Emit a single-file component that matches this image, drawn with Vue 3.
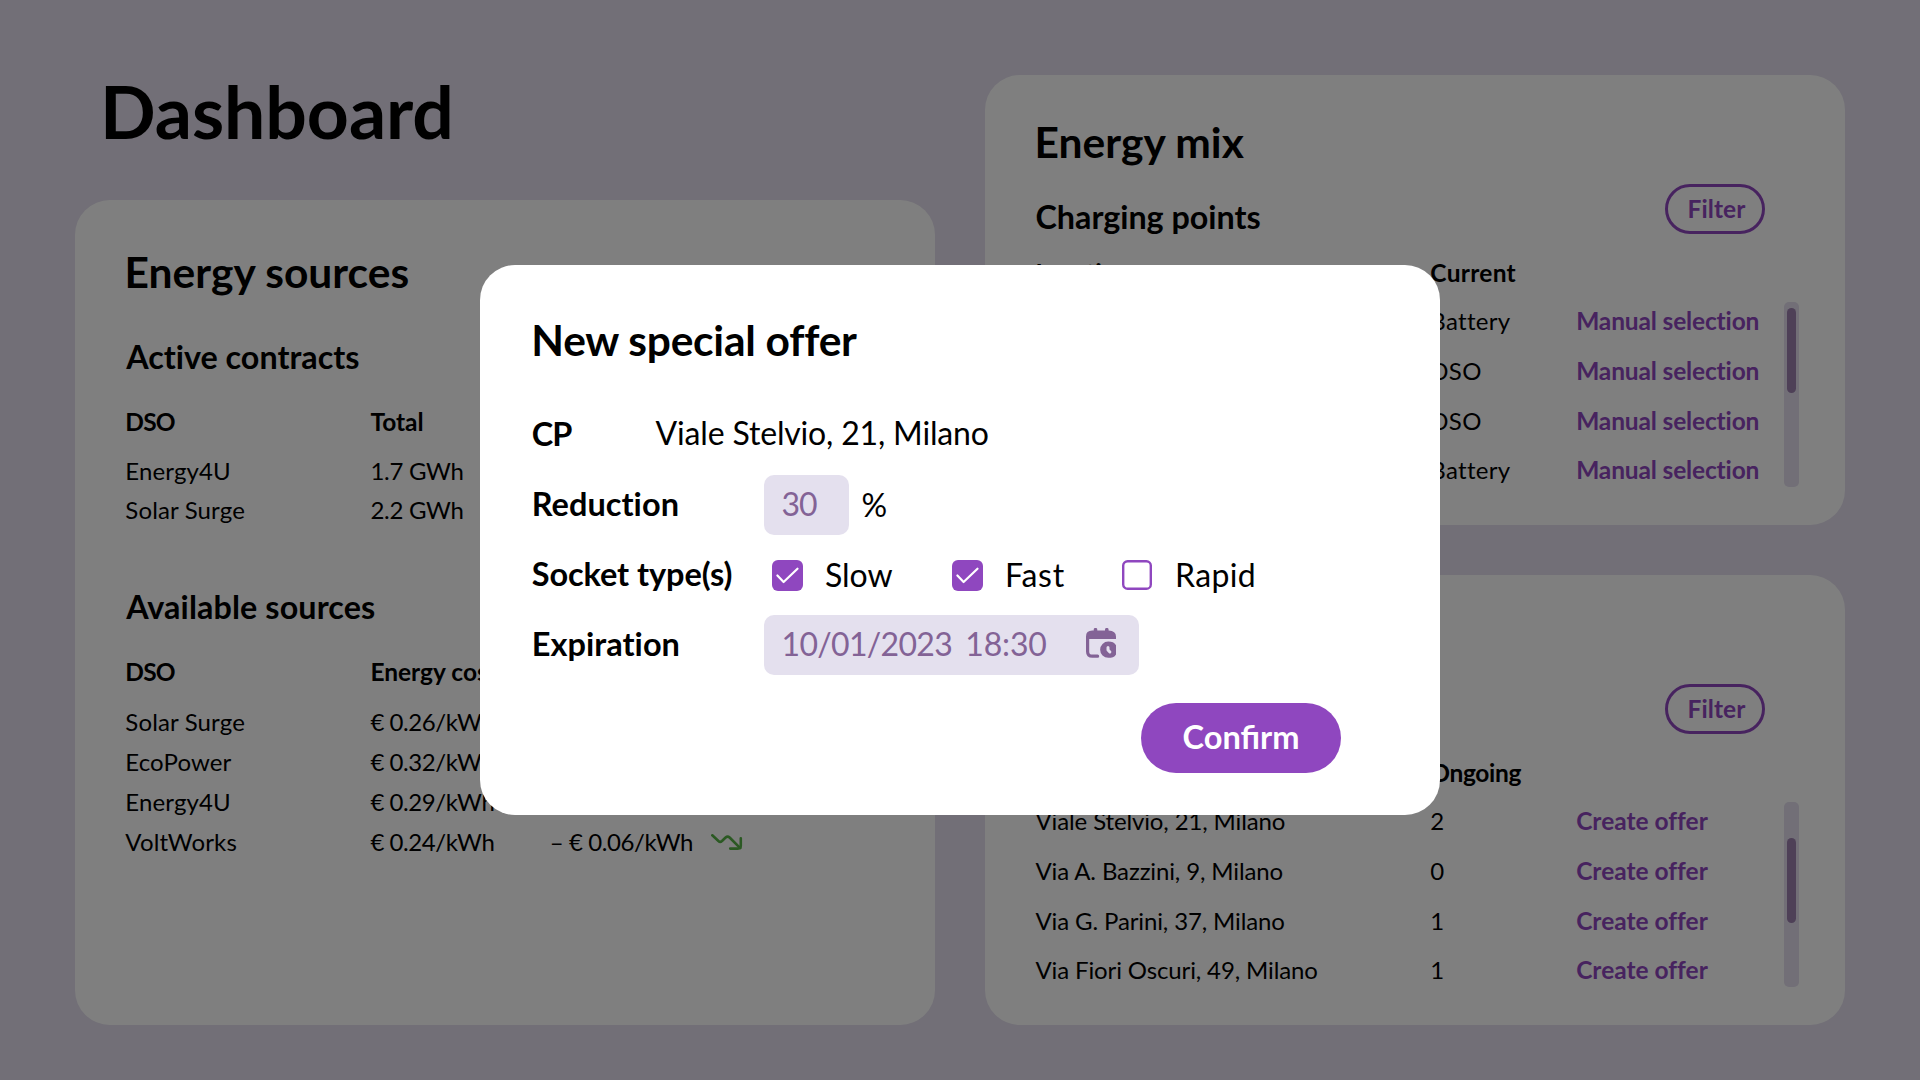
<script setup>
import { ref } from 'vue'

const contracts = [
  { dso: 'Energy4U', total: '1.7 GWh' },
  { dso: 'Solar Surge', total: '2.2 GWh' },
]

const sources = [
  { dso: 'Solar Surge', cost: '€ 0.26/kWh' },
  { dso: 'EcoPower', cost: '€ 0.32/kWh' },
  { dso: 'Energy4U', cost: '€ 0.29/kWh' },
  { dso: 'VoltWorks', cost: '€ 0.24/kWh', delta: '– € 0.06/kWh' },
]

const addresses = [
  'Viale Stelvio, 21, Milano',
  'Via A. Bazzini, 9, Milano',
  'Via G. Parini, 37, Milano',
  'Via Fiori Oscuri, 49, Milano',
]

const panels = [
  {
    title: 'Energy mix',
    kind: 'mix',
    column: 'Current',
    action: 'Manual selection',
    values: ['Battery', 'DSO', 'DSO', 'Battery'],
    thumb: 6,
  },
  {
    title: 'Special offers',
    kind: 'special',
    column: 'Ongoing',
    action: 'Create offer',
    values: ['2', '0', '1', '1'],
    thumb: 36,
  },
]

const sockets = ref([
  { name: 'Slow', on: true },
  { name: 'Fast', on: true },
  { name: 'Rapid', on: false },
])
</script>

<template>
  <div class="screen">
    <main class="dashboard">
      <div class="left">
        <h1>Dashboard</h1>
        <section class="card sources">
          <h2>Energy sources</h2>
          <h3>Active contracts</h3>
          <div class="row head">
            <span class="c1 dso">DSO</span><span class="c2">Total</span>
          </div>
          <div class="body contracts">
            <div v-for="c in contracts" :key="c.dso" class="row">
              <span class="c1 name">{{ c.dso }}</span><span class="c2 energy">{{ c.total }}</span>
            </div>
          </div>
          <h3 class="available">Available sources</h3>
          <div class="row head">
            <span class="c1 dso">DSO</span><span class="c2">Energy cost</span>
          </div>
          <div class="body offers">
            <div v-for="s in sources" :key="s.dso" class="row">
              <span class="c1 name">{{ s.dso }}</span>
              <span class="c2 money">{{ s.cost }}</span>
              <span v-if="s.delta" class="c3 money">{{ s.delta }}</span>
              <svg v-if="s.delta" class="trend" width="32" height="17" viewBox="0 0 32 17">
                <path d="M1.3 1.3 L7.4 7 Q9.2 8.6 11 7 L14.6 3.5 Q16.6 1.7 18.6 3.5 L29.2 14.2" />
                <path d="M19.2 14.6 H26.8 Q29.8 14.6 29.8 11.6 V4.2" />
              </svg>
            </div>
          </div>
        </section>
      </div>

      <div class="right">
        <section v-for="p in panels" :key="p.title" class="card panel" :class="p.kind">
          <h2>{{ p.title }}</h2>
          <div class="sub">
            <h3>Charging points</h3>
            <button class="filter">Filter</button>
          </div>
          <div class="row head">
            <span class="loc">Location</span><span class="val">{{ p.column }}</span>
          </div>
          <div class="list">
            <div class="points">
              <div v-for="(a, i) in addresses" :key="a" class="row">
                <span class="loc address">{{ a }}</span>
                <span class="val">{{ p.values[i] }}</span>
                <a class="action">{{ p.action }}</a>
              </div>
            </div>
            <div class="track"><div class="thumb" :style="{ marginTop: p.thumb + 'px' }"></div></div>
          </div>
        </section>
      </div>
    </main>

    <div class="backdrop"></div>

    <div class="modal">
      <h2 class="modal-title">New special offer</h2>
      <div class="form">
        <div class="field">
          <label class="short">CP</label>
          <span class="text cp-value">Viale Stelvio, 21, Milano</span>
        </div>
        <div class="field">
          <label>Reduction</label>
          <div class="input number"><span>30</span></div>
          <span class="text percent">%</span>
        </div>
        <div class="field">
          <label class="socket">Socket type(s)</label>
          <div v-for="s in sockets" :key="s.name" class="option" :class="s.name.toLowerCase()">
            <svg v-if="s.on" width="31" height="31" viewBox="0 0 31 31">
              <rect width="31" height="31" rx="6" fill="#8f47bf" />
              <path d="M5.4 15.5 L11.6 22 L25.5 8.7" fill="none" stroke="#fff" stroke-width="2.2" stroke-linecap="round" stroke-linejoin="round" />
            </svg>
            <svg v-else width="31" height="31" viewBox="0 0 31 31">
              <rect x="1.2" y="1.2" width="27.6" height="27.6" rx="4.4" fill="none" stroke="#8f47bf" stroke-width="2.4" />
            </svg>
            <span>{{ s.name }}</span>
          </div>
        </div>
        <div class="field">
          <label>Expiration</label>
          <div class="input datetime">
            <span class="date">10/01/2023</span>
            <span class="time">18:30</span>
            <svg width="30" height="30" viewBox="0 0 30 30">
              <path fill="#836396" d="M0 11 V8.5 Q0 2.7 6.3 2.6 H7.7 V1.7 A1.8 1.8 0 0 1 11.3 1.7 V2.6 H19 V1.7 A1.8 1.8 0 0 1 22.6 1.7 V2.6 Q30 3 30 8.5 V11 Z" />
              <path fill="none" stroke="#836396" stroke-width="3.2" stroke-linecap="round" d="M1.6 10 V23.4 Q1.6 28.2 6.4 28.2 H11.6" />
              <path fill="#836396" d="M22.3 13.5 C26 13.5 28.4 14.6 30 17.2 V26.4 C28.4 29 26 29.8 22.3 29.8 A8.1 8.1 0 0 1 22.3 13.5 Z" />
              <path fill="none" stroke="#e4e0ee" stroke-width="3" stroke-linecap="round" stroke-linejoin="round" d="M22 19.4 V22 L23.9 24" />
            </svg>
          </div>
        </div>
      </div>
      <div class="actions"><button class="confirm">Confirm</button></div>
    </div>
  </div>
</template>

<style>
body {
  margin: 0;
}
</style>

<style scoped>
.screen {
  position: relative;
  width: 1920px;
  height: 1080px;
  overflow: hidden;
  background: #e4dfee;
  color: #000;
  font-family: Lato, 'Open Sans', sans-serif;
  font-size: 24px;
  white-space: nowrap;
}
.screen * {
  box-sizing: border-box;
}
h1,
h2,
h3 {
  margin: 0;
  font-weight: 700;
  font-variant-ligatures: none;
}
h1 {
  padding-left: 25px;
  font-size: 73.3px;
  line-height: 88px;
  letter-spacing: -0.06px;
}
h2 {
  font-size: 42.5px;
  line-height: 51px;
  letter-spacing: 0.04px;
}
h3 {
  padding-left: 1.7px;
  font-size: 32.3px;
  line-height: 41px;
  letter-spacing: 0;
}
button {
  font-family: inherit;
  font-weight: 700;
}

.dashboard {
  display: flex;
  gap: 50px;
  padding: 0 75px;
}
.left {
  width: 860px;
  padding-top: 67px;
}
.right {
  display: flex;
  flex-direction: column;
  gap: 50px;
  width: 860px;
  padding-top: 75px;
}
.card {
  background: #fff;
  border-radius: 35px;
}
.row {
  display: flex;
}
.head {
  font-size: 24.5px;
  font-weight: 700;
  line-height: 31px;
}

.sources {
  height: 825px;
  margin-top: 45px;
  padding: 46px 50px 0 49.5px;
}
.sources h3 {
  margin: 39px 0 29px;
}
.sources h3.available {
  margin: 57px 0 29px;
  letter-spacing: 0.1px;
}
.body {
  display: flex;
  flex-direction: column;
  line-height: 39px;
}
.contracts {
  margin-top: 14px;
}
.offers {
  gap: 1px;
  margin-top: 15px;
}
.c1 {
  width: 245.9px;
  padding-left: 0.8px;
}
.c2 {
  width: 179.4px;
}
.c3 {
  width: 161.2px;
}
.dso {
  letter-spacing: -0.8px;
}
.name {
  letter-spacing: 0.14px;
}
.energy {
  letter-spacing: -0.28px;
}
.money {
  letter-spacing: -0.42px;
}
.trend {
  margin-top: 12px;
  fill: none;
  stroke: #56b246;
  stroke-width: 2.6;
  stroke-linecap: round;
  stroke-linejoin: round;
}

.panel {
  height: 450px;
  padding: 41px 46px 0 49.5px;
}
.sub {
  display: flex;
  align-items: flex-start;
  justify-content: space-between;
  height: 41px;
  margin: 29px 34px 20px 0;
}
.sub h3 {
  padding-left: 1px;
  letter-spacing: -0.03px;
}
.filter {
  width: 100px;
  height: 50px;
  margin-top: -12px;
  padding: 0 0 1px 3px;
  border: 3px solid #8f47bf;
  border-radius: 25px;
  background: none;
  color: #8f47bf;
  font-size: 24.5px;
  line-height: 43px;
  letter-spacing: 0.12px;
  font-variant-ligatures: none;
}
.list {
  display: flex;
  justify-content: space-between;
  padding-top: 8.4px;
}
.points {
  display: flex;
  flex-direction: column;
  gap: 0.6px;
  line-height: 49px;
}
.loc {
  width: 395.8px;
  padding-left: 1px;
}
.address {
  letter-spacing: -0.13px;
}
.val {
  width: 145.9px;
}
.mix .val {
  letter-spacing: 0.3px;
}
.special .head .val {
  letter-spacing: -0.35px;
}
.action {
  color: #8f47bf;
  font-size: 24.5px;
  font-weight: 700;
  font-variant-ligatures: none;
}
.mix .action {
  letter-spacing: -0.15px;
}
.track {
  display: flow-root;
  width: 15px;
  height: 185px;
  margin-top: 5.6px;
  padding: 0 3px;
  border-radius: 5px;
  background: #e4dfee;
}
.thumb {
  height: 85px;
  border-radius: 4.5px;
  background: #9c80ae;
}

.backdrop {
  position: absolute;
  inset: 0;
  background: rgba(0, 0, 0, 0.5);
}

.modal {
  position: absolute;
  left: 480px;
  top: 265px;
  width: 960px;
  height: 550px;
  padding: 49px 99px 0 51.3px;
  border-radius: 35px;
  background: #fff;
  font-size: 32px;
}
.modal-title {
  letter-spacing: -0.25px;
}
.form {
  display: flex;
  flex-direction: column;
  gap: 10px;
  margin-top: 40px;
}
.field {
  display: flex;
  align-items: flex-start;
  height: 60px;
}
label {
  flex: none;
  width: 232.7px;
  padding: 8px 0 0 0.4px;
  font-size: 32.5px;
  font-weight: 700;
  line-height: 41px;
  letter-spacing: 0.04px;
  font-variant-ligatures: none;
}
.short {
  width: 124.3px;
  letter-spacing: -0.9px;
}
.socket {
  width: 240.7px;
  letter-spacing: -0.08px;
}
.text {
  line-height: 40px;
}
.cp-value {
  padding-top: 8px;
  letter-spacing: -0.17px;
}
.input {
  display: flex;
  height: 60px;
  border-radius: 10px;
  background: #e4e0ee;
  color: #836396;
  line-height: 40px;
  padding: 9px 0 0 17.6px;
}
.number {
  width: 85px;
  letter-spacing: -1.2px;
}
.percent {
  padding: 10px 0 0 12.6px;
}
.datetime {
  width: 375px;
}
.date {
  width: 183.7px;
  letter-spacing: -0.7px;
}
.time {
  width: 120.7px;
  letter-spacing: -0.15px;
}
.datetime svg {
  margin-top: 4px;
}
.option {
  display: flex;
  flex: none;
  width: 180px;
  padding-top: 10px;
  line-height: 40px;
}
.option svg {
  flex: none;
  margin: 5px 22px 0 0;
}
.slow {
  letter-spacing: -0.05px;
}
.fast {
  width: 170px;
}
.fast span {
  letter-spacing: 0.7px;
}
.rapid {
  letter-spacing: 0.35px;
}
.actions {
  display: flex;
  justify-content: flex-end;
  margin-top: 28px;
}
.confirm {
  width: 200px;
  height: 70px;
  padding: 0 0 3px 0;
  border: 0;
  border-radius: 35px;
  background: #8f47bf;
  color: #fff;
  font-size: 32.6px;
  line-height: 41px;
}
</style>
